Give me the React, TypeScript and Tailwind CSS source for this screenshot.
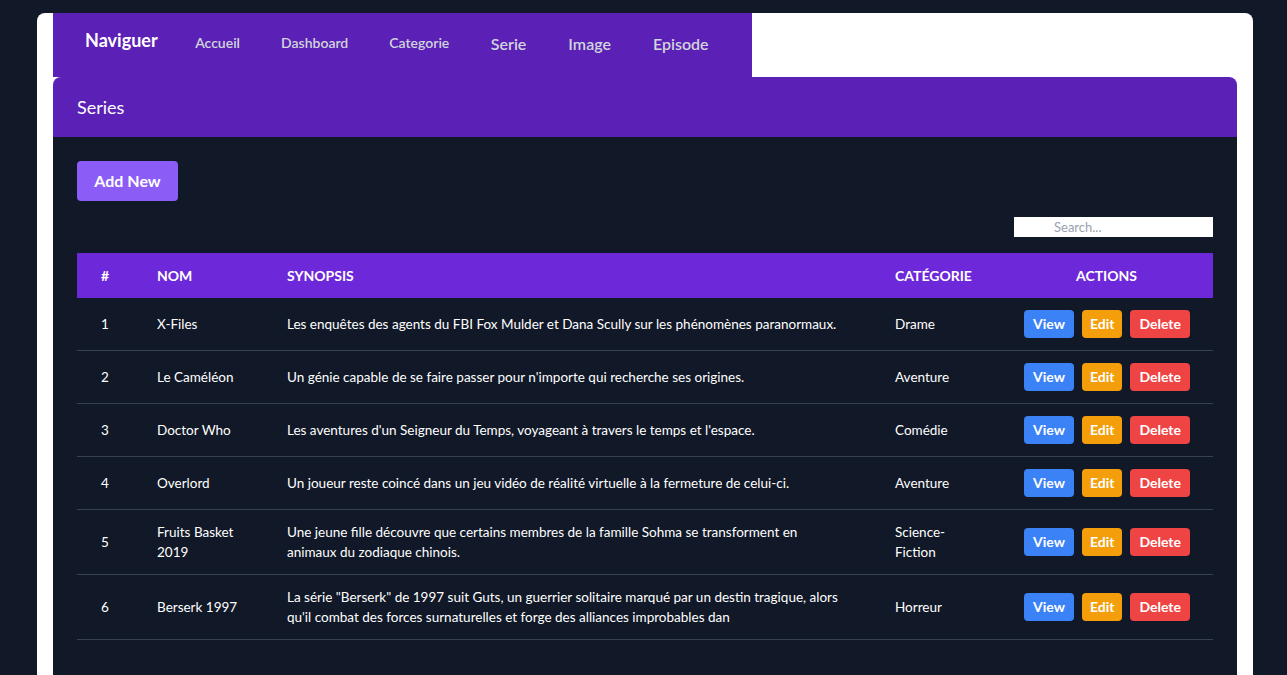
const series = [
  {
    id: 1,
    nom: 'X-Files',
    synopsis: 'Les enquêtes des agents du FBI Fox Mulder et Dana Scully sur les phénomènes paranormaux.',
    categorie: 'Drame',
  },
  {
    id: 2,
    nom: 'Le Caméléon',
    synopsis: "Un génie capable de se faire passer pour n'importe qui recherche ses origines.",
    categorie: 'Aventure',
  },
  {
    id: 3,
    nom: 'Doctor Who',
    synopsis: "Les aventures d'un Seigneur du Temps, voyageant à travers le temps et l'espace.",
    categorie: 'Comédie',
  },
  {
    id: 4,
    nom: 'Overlord',
    synopsis: 'Un joueur reste coincé dans un jeu vidéo de réalité virtuelle à la fermeture de celui-ci.',
    categorie: 'Aventure',
  },
  {
    id: 5,
    nom: 'Fruits Basket 2019',
    synopsis: 'Une jeune fille découvre que certains membres de la famille Sohma se transforment en animaux du zodiaque chinois.',
    categorie: 'Science-Fiction',
  },
  {
    id: 6,
    nom: 'Berserk 1997',
    synopsis: 'La série "Berserk" de 1997 suit Guts, un guerrier solitaire marqué par un destin tragique, alors qu\'il combat des forces surnaturelles et forge des alliances improbables dan',
    categorie: 'Horreur',
  },
];

export default function App() {
  return (
    <div className="min-h-screen bg-[#111827] pt-[13px] font-['Lato','Noto_Sans',sans-serif]">
      <div className="ml-[37px] w-[1216px] bg-white rounded-lg px-4 pb-10">
        {/* top navigation */}
        <nav className="w-[699px] h-16 bg-[#5b21b6] flex items-start pl-8">
          <span className="mt-[14px] mr-[17px] text-[18px] font-bold text-white">Naviguer</span>
          <a className="mt-[19px] px-[20.5px] text-[14px] font-semibold text-gray-300">Accueil</a>
          <a className="mt-[19px] px-[20.5px] text-[14px] font-semibold text-gray-300">Dashboard</a>
          <a className="mt-[19px] px-[20.5px] text-[14px] font-semibold text-gray-300">Categorie</a>
          <a className="mt-[19px] px-[21px] text-[16px] font-semibold text-gray-300">Serie</a>
          <a className="mt-[19px] px-[21px] text-[16px] font-semibold text-gray-300">Image</a>
          <a className="mt-[19px] px-[21px] text-[16px] font-semibold text-gray-300">Episode</a>
        </nav>

        <div className="rounded-t-lg overflow-hidden">
          <div className="h-[60px] bg-[#5b21b6] px-6 flex items-center">
            <h2 className="text-[18px] text-white">Series</h2>
          </div>

          <div className="bg-[#111827] px-6 pt-6 pb-12">
            <button className="h-10 w-[101px] rounded bg-[#8b5cf6] text-white font-bold text-[16px]">
              Add New
            </button>

            <div className="flex justify-end mt-4 mb-4">
              <input
                placeholder="Search..."
                className="w-[199px] h-5 bg-white pl-10 text-[13px] text-gray-700 placeholder:text-gray-400 outline-none"
              />
            </div>

            <table className="w-full table-fixed text-[13.5px] text-white">
              <colgroup>
                <col className="w-[56px]" />
                <col className="w-[130px]" />
                <col className="w-[608px]" />
                <col className="w-[129px]" />
                <col className="w-[213px]" />
              </colgroup>
              <thead>
                <tr className="bg-[#6d28d9] h-[45px] text-[14px] text-white font-bold uppercase text-left">
                  <th className="px-6">#</th>
                  <th className="px-6">Nom</th>
                  <th className="px-6">Synopsis</th>
                  <th className="px-6">Catégorie</th>
                  <th className="px-6 text-center">Actions</th>
                </tr>
              </thead>
              <tbody>
                {series.map((s) => (
                  <tr key={s.id} className="border-b border-gray-700 leading-5">
                    <td className="px-6 py-3">{s.id}</td>
                    <td className="pl-6 pr-4 py-3">{s.nom}</td>
                    <td className="px-6 py-3">{s.synopsis}</td>
                    <td className="px-6 py-3">{s.categorie}</td>
                    <td className="px-6 py-3">
                      <div className="flex gap-2 text-[14px]">
                        <button className="h-7 px-[9px] rounded bg-[#3b82f6] text-white font-bold">View</button>
                        <button className="h-7 px-[8px] rounded bg-[#f59e0b] text-white font-bold">Edit</button>
                        <button className="h-7 px-[9px] rounded bg-[#ef4444] text-white font-bold">Delete</button>
                      </div>
                    </td>
                  </tr>
                ))}
              </tbody>
            </table>
          </div>
        </div>
      </div>
    </div>
  );
}
